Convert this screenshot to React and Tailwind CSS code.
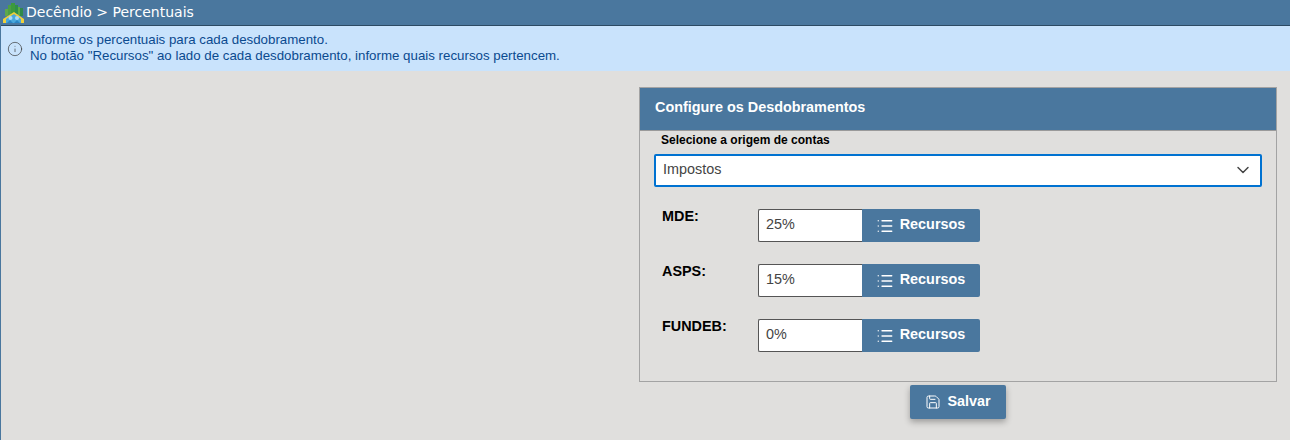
import { List, Save, ChevronDown, Info } from "lucide-react";

const rows = [
  { label: "MDE:", value: "25%" },
  { label: "ASPS:", value: "15%" },
  { label: "FUNDEB:", value: "0%" },
];

function Logo() {
  return (
    <svg width="22" height="22" viewBox="0 0 22 22" className="shrink-0">
      <rect x="2" y="7" width="3" height="7" fill="#5fa84a" />
      <rect x="5" y="3" width="3" height="10" fill="#4c9f45" />
      <rect x="8" y="1" width="4" height="11" fill="#3c9a3e" />
      <rect x="12" y="3" width="3" height="9" fill="#2f8f4a" />
      <rect x="15" y="5" width="2" height="8" fill="#5aad45" />
      <rect x="17" y="6" width="3" height="8" fill="#2f8a4a" />
      <path d="M0 21 L0 17 L11 10 L21 17 L21 21 Z" fill="#efd03a" />
      <path d="M3 21 L3 17 L11 12 L18 17 L18 21 Z" fill="#4aa8dc" />
      <circle cx="7.5" cy="16" r="2" fill="#a9daf3" />
      <circle cx="14" cy="16" r="2" fill="#a9daf3" />
      <path d="M4 21 L7 18 L10 21 Z M11 21 L14 18 L17 21 Z" fill="#2a86c4" />
    </svg>
  );
}

function ResourceRow({ label, value }) {
  return (
    <div className="flex h-[33px] items-start">
      <div className="w-[104px] pl-[8px] text-[14.4px] leading-[14px] font-bold text-black">{label}</div>
      <div className="flex h-[33px] w-[222px]">
        <div className="flex w-[104px] items-center rounded-l-[2px] border border-[#555] border-r-0 bg-white pb-[2px] pl-[7px] text-[14.4px] text-[#444]">
          {value}
        </div>
        <button className="flex flex-1 items-center justify-center gap-[6px] rounded-r-[2px] bg-[#4a779e] pb-[2px] pr-[1px] text-[14.4px] font-bold text-white">
          <List size={18} strokeWidth={1.75} className="mt-[2px]" />
          Recursos
        </button>
      </div>
    </div>
  );
}

export default function App() {
  return (
    <div className="h-[440px] overflow-hidden border-l border-[#4a779e] bg-[#e0dfdd] font-['Liberation_Sans',sans-serif]">
      <div className="flex h-[26px] items-center gap-[1px] border-b border-[#2c4a63] bg-[#4a779e] pl-[2px] font-['DejaVu_Sans',sans-serif] text-[14px] text-white">
        <Logo />
        <span>Decêndio &gt; Percentuais</span>
      </div>
      <div className="flex h-[45px] items-center gap-[7px] bg-[#c9e3fc] pl-[6px] text-[13.3px] leading-[16px] text-[#0b4a8f]">
        <Info size={16} strokeWidth={1} className="mt-[1px] text-[#333]" />
        <div className="pb-[1px]">
          <p>Informe os percentuais para cada desdobramento.</p>
          <p>No botão "Recursos" ao lado de cada desdobramento, informe quais recursos pertencem.</p>
        </div>
      </div>
      <div className="flex flex-col items-end pr-[13px] pt-[16px]">
        <div className="flex flex-col items-center">
          <section className="h-[295px] w-[638px] border border-[#a3a3a3]">
            <h2 className="flex h-[43px] items-center border-b border-[#9a9a9a] bg-[#4a779e] pb-[2px] pl-[15px] text-[14.4px] font-bold text-white">
              Configure os Desdobramentos
            </h2>
            <div className="px-[14px]">
              <label className="mt-[2px] block pl-[7px] text-[12px] leading-[14px] font-bold text-black">
                Selecione a origem de contas
              </label>
              <div className="mt-[7px] flex h-[33px] w-[608px] items-center justify-between rounded-[2px] border-2 border-[#0072d1] bg-white pb-[2px] pl-[7px] pr-[7px] text-[14.4px] text-[#444]">
                <span>Impostos</span>
                <ChevronDown size={20} strokeWidth={1.75} className="text-[#444]" />
              </div>
              <div className="mt-[22px] flex flex-col gap-[22px]">
                {rows.map((r) => (
                  <ResourceRow key={r.label} label={r.label} value={r.value} />
                ))}
              </div>
            </div>
          </section>
          <button className="mt-[3px] flex h-[34px] w-[96px] items-center justify-center gap-[6px] rounded-[2px] bg-[#4a779e] pb-[1px] text-[14.4px] font-bold text-white shadow-[0_3px_6px_rgba(0,0,0,0.3)]">
            <Save size={16} strokeWidth={1.5} className="mt-[1px]" />
            Salvar
          </button>
        </div>
      </div>
    </div>
  );
}
